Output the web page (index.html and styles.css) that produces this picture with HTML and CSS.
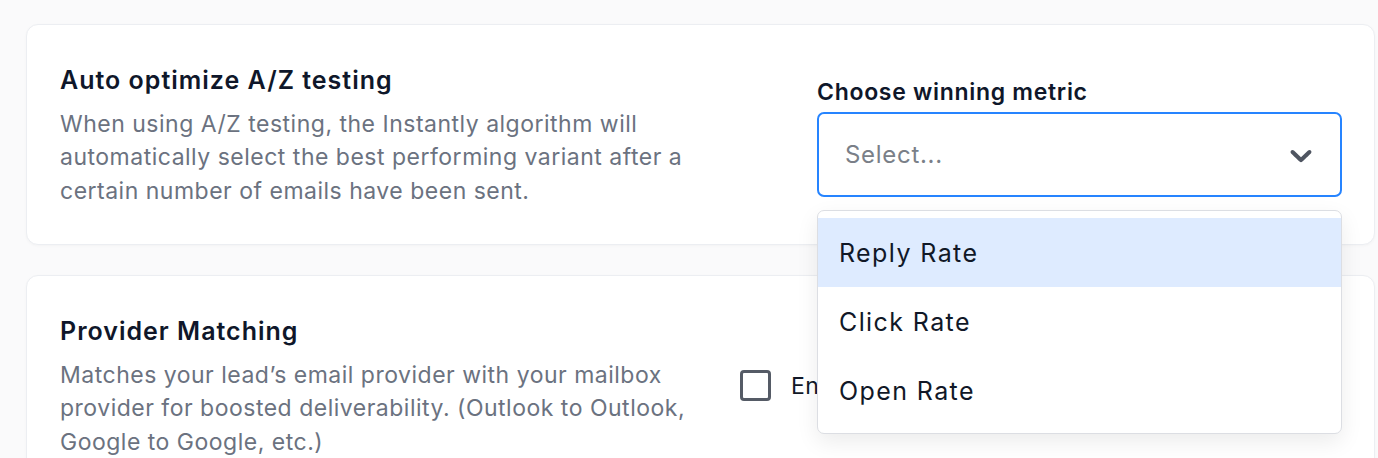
FILE: index.html
```html
<!DOCTYPE html>
<html lang="en">
<head>
<meta charset="utf-8">
<title>Campaign settings</title>
<link rel="stylesheet" href="styles.css">
</head>
<body>
<main class="page">
  <section class="card">
    <div class="info">
      <h2 class="title">Auto optimize A/Z testing</h2>
      <p class="desc">When using A/Z testing, the Instantly algorithm will<br>automatically select the best performing variant after a<br>certain number of emails have been sent.</p>
    </div>
    <div class="field">
      <label class="field-label">Choose winning metric</label>
      <div class="select-wrap">
        <div class="select">
          <span class="placeholder">Select...</span>
          <svg class="chevron" viewBox="0 0 20 20" aria-hidden="true"><path d="M4.516 7.548c0.436-0.446 1.043-0.481 1.576 0l3.908 3.747 3.908-3.747c0.533-0.481 1.141-0.446 1.574 0 0.436 0.445 0.408 1.197 0 1.615-0.406 0.418-4.695 4.502-4.695 4.502-0.217 0.223-0.502 0.335-0.787 0.335s-0.57-0.112-0.789-0.335c0 0-4.287-4.084-4.695-4.502s-0.436-1.170 0-1.615z"/></svg>
        </div>
        <ul class="menu">
          <li class="option focused">Reply Rate</li>
          <li class="option">Click Rate</li>
          <li class="option">Open Rate</li>
        </ul>
      </div>
    </div>
  </section>
  <section class="card">
    <div class="info">
      <h2 class="title">Provider Matching</h2>
      <p class="desc">Matches your lead’s email provider with your mailbox<br>provider for boosted deliverability. (Outlook to Outlook,<br>Google to Google, etc.)</p>
    </div>
    <label class="check">
      <span class="box"></span>
      <span class="check-label">Enable provider matching</span>
    </label>
  </section>
</main>
</body>
</html>
```

FILE: styles.css
```css
* { box-sizing: border-box; }
html, body { margin: 0; padding: 0; }
body {
  background: #fafafb;
  font-family: Inter, "Noto Sans", sans-serif;
  color: #101828;
  width: 1378px;
  height: 458px;
  overflow: hidden;
}
.page {
  display: flex;
  flex-direction: column;
  gap: 30px;
  padding: 24px 3px 0 26px;
}
.card {
  background: #ffffff;
  border: 1px solid #eceef2;
  border-radius: 12px;
  box-shadow: 0 1px 3px rgba(16, 24, 40, 0.03);
  height: 221px;
  flex: 0 0 221px;
  display: flex;
  align-items: center;
  padding: 4px 32px 0 33px;
}
.info {
  flex: 0 0 680px;
}
.title {
  margin: 0;
  font-size: 25px;
  line-height: 30px;
  font-weight: 600;
  letter-spacing: 1px;
  color: #0f172a;
}
.desc {
  margin: 13px 0 0;
  font-size: 23px;
  line-height: 33.5px;
  letter-spacing: 0.5px;
  color: #6b7280;
}
.field {
  margin-left: auto;
  width: 525px;
  margin-top: 3px;
}
.field-label {
  display: block;
  font-size: 23px;
  font-weight: 600;
  line-height: 26px;
  letter-spacing: 0.7px;
  color: #0f172a;
  margin-bottom: 7px;
}
.select-wrap {
  position: relative;
}
.select {
  height: 85px;
  border: 2px solid #2684ff;
  border-radius: 7px;
  display: flex;
  align-items: center;
  justify-content: space-between;
  padding: 0 21px 0 26px;
  background: #fff;
}
.placeholder {
  font-size: 24px;
  letter-spacing: 0.7px;
  color: #7a7f88;
}
.chevron {
  width: 36px;
  height: 36px;
  fill: #4f5561;
}
.menu {
  position: absolute;
  top: 98px;
  left: 0;
  right: 0;
  z-index: 5;
  margin: 0;
  padding: 7px 0 8px;
  list-style: none;
  background: #fff;
  border: 1px solid #dcdee3;
  border-radius: 7px;
  box-shadow: 0 8px 22px rgba(0, 0, 0, 0.08);
}
.option {
  height: 69px;
  display: flex;
  align-items: center;
  padding-left: 21px;
  font-size: 25px;
  letter-spacing: 1.4px;
  color: #111827;
}
.option.focused {
  background: #deebff;
}
.check {
  display: flex;
  align-items: center;
  gap: 20px;
  margin-top: -4px;
}
.box {
  flex: 0 0 31px;
  width: 31px;
  height: 31px;
  border: 3px solid #555b66;
  border-radius: 4px;
  background: #fff;
}
.check-label {
  font-size: 23px;
  letter-spacing: 0.5px;
  color: #111827;
  white-space: nowrap;
}
```
